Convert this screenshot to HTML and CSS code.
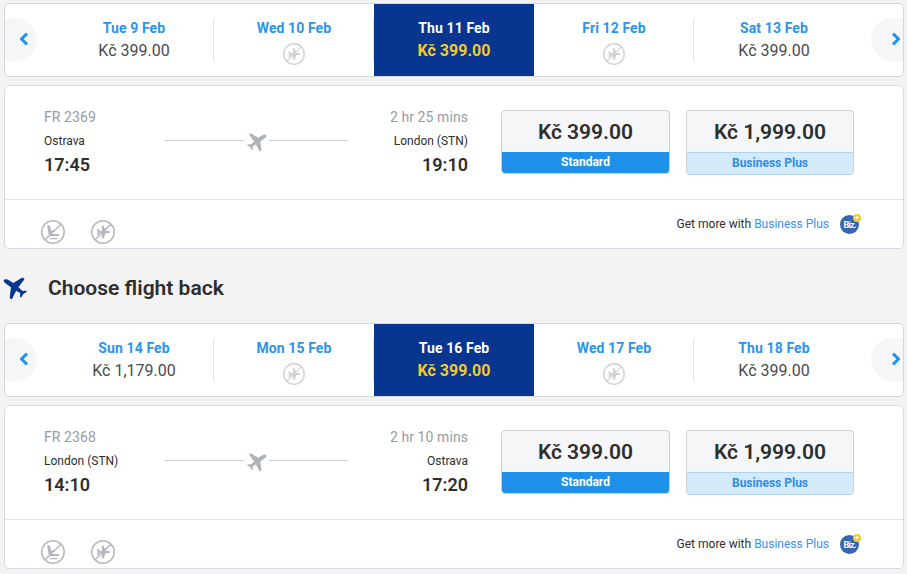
FILE: index.html
```html
<!DOCTYPE html>
<html lang="en">
<head>
<meta charset="utf-8">
<title>Flights</title>
<link rel="stylesheet" href="styles.css">
</head>
<body>
<svg class="defs" width="0" height="0">
  <symbol id="plane" viewBox="0 0 20 20"><path d="M19.300 3.300C19.800 4.600 18.300 6 16.300 7.200L13.400 9.400 14.400 18.300 12.700 19.500 9 12.200 5.500 14.400 6 17.300 4.900 18 3.100 14.900 0 13.200.9 12.300 3.700 12.400 7.200 9.400 2 2.600 3.800 1.300 11.400 5.800 14.700 3.700C16.700 2.500 18.700 2.200 19.300 3.300z"/></symbol>
  <symbol id="no-flight" viewBox="0 0 24 24"><circle cx="12" cy="12" r="11.2" fill="none" stroke="currentColor" stroke-width="1.5"/><path d="M4.200 19.800 19.800 4.200" stroke="currentColor" stroke-width="1.400"/><path fill="currentColor" d="M6 8.800h1.200L8.700 11h2.500L10.600 5.500h1.800L14.800 11H17c1.200 0 2 .5 2 1s-.8 1-2 1h-2.200l-2.400 5.500h-1.800L11.200 13H8.700l-1.500 2.200H6l.6-3.200z"/></symbol>
  <symbol id="no-seat" viewBox="0 0 24 24"><circle cx="12" cy="12" r="11.2" fill="none" stroke="currentColor" stroke-width="1.5"/><path d="M4.200 19.800 19.800 4.200" stroke="currentColor" stroke-width="1.400"/><path fill="currentColor" d="M6 5.500h3l1 5h3.700v1.500H10.400l.6 2H18v2.200H9.300C8.300 16 7.800 15 7.600 14zM9 18h7.300v1.200H9z"/></symbol>
  <symbol id="chevron" viewBox="0 0 10 14"><path d="M8 1.500 2.600 7 8 12.500" fill="none" stroke="#2091eb" stroke-width="3"/></symbol>
</svg>

<main class="page">
  <nav class="dates">
    <button class="arrow prev"><svg><use href="#chevron"/></svg></button>
    <div class="date"><b>Tue 9 Feb</b><span>Kč 399.00</span></div>
    <div class="date"><b>Wed 10 Feb</b><svg class="none"><use href="#no-flight"/></svg></div>
    <div class="date selected"><b>Thu 11 Feb</b><span>Kč 399.00</span></div>
    <div class="date"><b>Fri 12 Feb</b><svg class="none"><use href="#no-flight"/></svg></div>
    <div class="date"><b>Sat 13 Feb</b><span>Kč 399.00</span></div>
    <button class="arrow next"><svg><use href="#chevron"/></svg></button>
  </nav>
  <section class="flight">
    <div class="details">
      <div class="point"><span class="meta">FR 2369</span><span class="city">Ostrava</span><span class="time">17:45</span></div>
      <div class="route"><svg><use href="#plane"/></svg></div>
      <div class="point arrival"><span class="meta">2 hr 25 mins</span><span class="city">London (STN)</span><span class="time">19:10</span></div>
      <button class="fare standard"><span class="price">Kč 399.00</span><span class="type">Standard</span></button>
      <button class="fare business"><span class="price">Kč 1,999.00</span><span class="type">Business Plus</span></button>
    </div>
    <div class="extras">
      <svg class="rule"><use href="#no-seat"/></svg><svg class="rule"><use href="#no-flight"/></svg>
      <p class="more">Get more with <a>Business Plus</a></p>
      <span class="biz">Biz.<i>+</i></span>
    </div>
  </section>

  <h2 class="heading"><svg><use href="#plane"/></svg>Choose flight back</h2>

  <nav class="dates">
    <button class="arrow prev"><svg><use href="#chevron"/></svg></button>
    <div class="date"><b>Sun 14 Feb</b><span>Kč 1,179.00</span></div>
    <div class="date"><b>Mon 15 Feb</b><svg class="none"><use href="#no-flight"/></svg></div>
    <div class="date selected"><b>Tue 16 Feb</b><span>Kč 399.00</span></div>
    <div class="date"><b>Wed 17 Feb</b><svg class="none"><use href="#no-flight"/></svg></div>
    <div class="date"><b>Thu 18 Feb</b><span>Kč 399.00</span></div>
    <button class="arrow next"><svg><use href="#chevron"/></svg></button>
  </nav>
  <section class="flight">
    <div class="details">
      <div class="point"><span class="meta">FR 2368</span><span class="city">London (STN)</span><span class="time">14:10</span></div>
      <div class="route"><svg><use href="#plane"/></svg></div>
      <div class="point arrival"><span class="meta">2 hr 10 mins</span><span class="city">Ostrava</span><span class="time">17:20</span></div>
      <button class="fare standard"><span class="price">Kč 399.00</span><span class="type">Standard</span></button>
      <button class="fare business"><span class="price">Kč 1,999.00</span><span class="type">Business Plus</span></button>
    </div>
    <div class="extras">
      <svg class="rule"><use href="#no-seat"/></svg><svg class="rule"><use href="#no-flight"/></svg>
      <p class="more">Get more with <a>Business Plus</a></p>
      <span class="biz">Biz.<i>+</i></span>
    </div>
  </section>
</main>
</body>
</html>
```
FILE: styles.css
```css
* { box-sizing: border-box; }
body { margin: 0; background: #f3f3f3; color: #2e2e2e; font-family: Roboto, sans-serif; }
button { padding: 0; border: 0; font: inherit; color: inherit; }
.defs { position: absolute; }
.page { width: 900px; padding-top: 3px; margin-left: 4px; }

.dates, .flight { background: #fff; border: 1px solid #d3d6da; border-radius: 5px; overflow: hidden; }
.dates { height: 74px; display: grid; grid-template-columns: 49px repeat(5, 160px) 49px; }
.arrow { width: 32px; height: 43px; margin-top: 14px; background: #f4f6f8; display: flex; align-items: center; }
.arrow svg { width: 10px; height: 14px; margin-top: -1px; }
.prev { border-radius: 0 22px 22px 0; padding-left: 14px; }
.next { justify-self: end; border-radius: 22px 0 0 22px; padding-left: 20px; }
.next svg { transform: scaleX(-1); }
.date { display: flex; flex-direction: column; align-items: center; padding-top: 15px; font-size: 15px; line-height: 20px;
  background: linear-gradient(#e1e3e5, #e1e3e5) right 14px / 1px 44px no-repeat; }
.date:nth-child(6) { background: none; }
.date b { font-size: 14px; font-weight: 700; line-height: 18px; letter-spacing: .1px; color: #2c94ea; }
.date span { margin-top: 4px; font-size: 16px; color: #4b4b4b; }
.date.selected { background: #073590; }
.date.selected b { color: #fff; }
.date.selected span { color: #f1c933; font-weight: 700; }
.none { width: 22px; height: 22px; margin-top: 6px; color: #cfd2d5; }

.flight { height: 164px; margin-top: 8px; border-color: #d5dbe1; }
.details { height: 114px; padding: 24px 48px 0 39px; display: flex; align-items: flex-start; border-bottom: 1px solid #e1e5e8; }
.point { width: 120px; margin-top: -1px; display: flex; flex-direction: column; }
.arrival { align-items: flex-end; }
.meta { font-size: 14px; line-height: 16px; letter-spacing: .08px; color: #979ba6; }
.city { margin-top: 8px; font-size: 12px; line-height: 16px; }
.time { margin-top: 6px; font-size: 18px; line-height: 20px; font-weight: 600; }
.route { width: 183px; height: 20px; margin: 22px 0 0 1px; display: flex; align-items: center; gap: 2px; }
.route::before { content: ""; width: 80px; height: 1px; margin-top: -3px; background: #cfd1d4; }
.route::after { content: ""; flex: 1; height: 1px; margin-top: -3px; background: #cfd1d4; }
.route svg { width: 20px; height: 20px; fill: #adb2bc; }
.fare { height: 64px; border: 1px solid #d0d3d6; border-radius: 4px; overflow: hidden; background: #f4f6f8; display: flex; flex-direction: column; }
.price { width: 100%; height: 41px; font-size: 21px; line-height: 43px; font-weight: 600; }
.type { width: 100%; font-size: 12px; font-weight: 700; flex: 1; line-height: 20px; }
.standard { width: 169px; margin-left: 33px; }
.standard .type { background: #2091eb; color: #fff; }
.business { width: 168px; height: 65px; margin-left: 16px; }
.business .type { background: #d4e9fa; border-top: 1px solid #b1d5ef; color: #2c8ee4; }
.business { border-bottom-color: #b1d5ef; }
.extras { height: 48px; padding: 0 44px 0 36px; display: flex; }
.rule { width: 24px; height: 24px; margin: 20px 26px 0 0; color: #b3b7bf; }
.more { margin: 16px 11px 0 auto; font-size: 12px; line-height: 16px; }
.more a { color: #3a91e8; }
.biz { position: relative; width: 19px; height: 19px; margin-top: 15px; border-radius: 50%; background: #3766b0; color: #fff; font-size: 9px; font-weight: 700; line-height: 20px; text-align: center; letter-spacing: -.8px; }
.biz i { position: absolute; left: 13px; top: -1px; width: 8px; height: 8px; border-radius: 50%; background: #f1c933; font: 700 8px/8px Roboto, sans-serif; letter-spacing: 0; }

.heading { height: 74px; margin: 0; padding-top: 3px; display: flex; align-items: center; font-size: 21px; font-weight: 600; }
.heading svg { width: 24px; height: 24px; margin: 1px 21px 0 -1px; fill: #073590; transform: scaleX(-1); }
```
